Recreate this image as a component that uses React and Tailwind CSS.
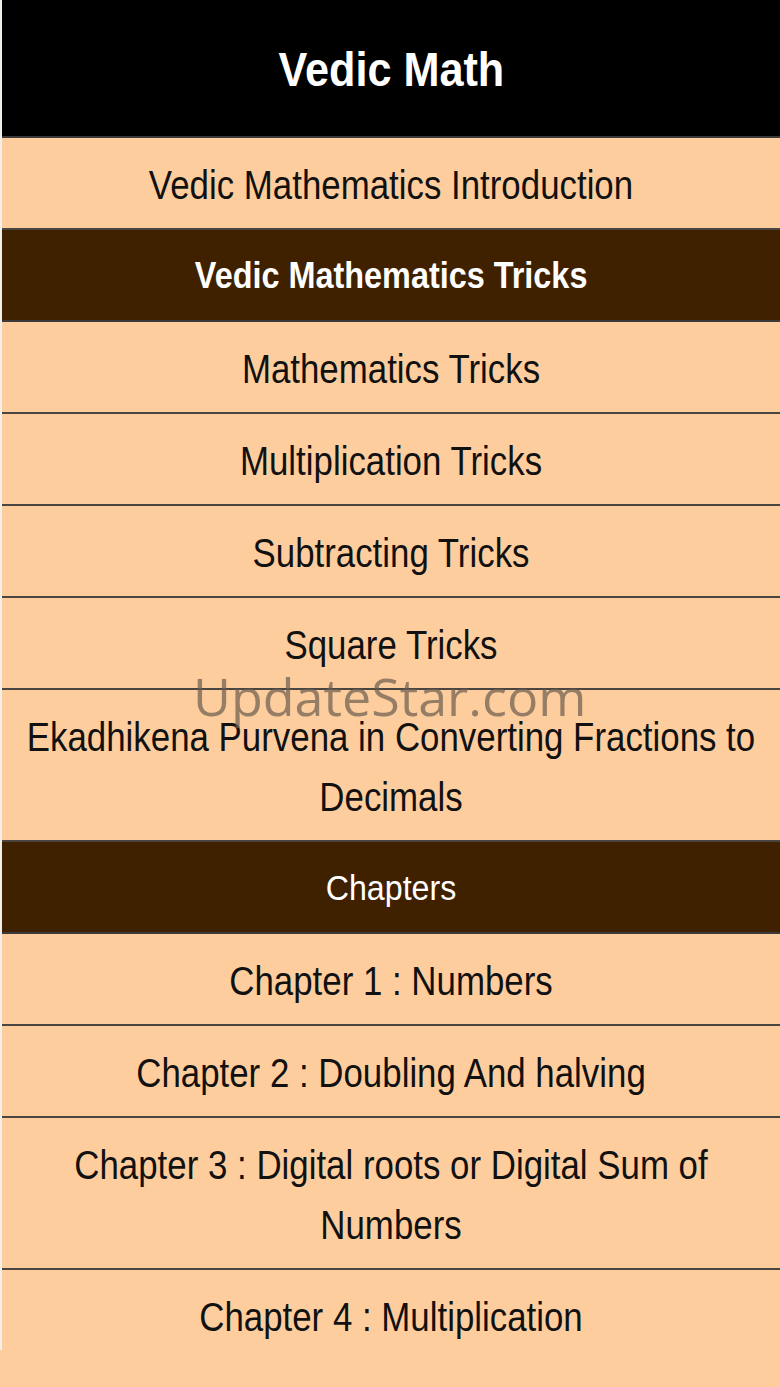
import React from 'react';

const items = [
  { type: 'row', label: 'Vedic Mathematics Introduction' },
  { type: 'head', label: 'Vedic Mathematics Tricks', bold: true },
  { type: 'row', label: 'Mathematics Tricks' },
  { type: 'row', label: 'Multiplication Tricks' },
  { type: 'row', label: 'Subtracting Tricks' },
  { type: 'row', label: 'Square Tricks' },
  { type: 'row', label: 'Ekadhikena Purvena in Converting Fractions to Decimals' },
  { type: 'head', label: 'Chapters' },
  { type: 'row', label: 'Chapter 1 : Numbers' },
  { type: 'row', label: 'Chapter 2 : Doubling And halving' },
  { type: 'row', label: 'Chapter 3 : Digital roots or Digital Sum of Numbers' },
  { type: 'row', label: 'Chapter 4 : Multiplication', last: true },
];

const font = { fontFamily: '"Liberation Sans", Arial, sans-serif' };

// screenshot text is squeezed horizontally, so each label gets a scale-x
const App = () => {
  return (
    <div className="relative min-h-screen overflow-hidden bg-[#fecd9d]" style={font}>
      <div className="border-l-2 border-[#f3eee8]">
        <header className="h-[138px] bg-black flex items-center justify-center border-b-2 border-[#3a3a3a]">
          <h1 className="text-white font-bold text-[48px] leading-none scale-x-[0.9] pt-1">Vedic Math</h1>
        </header>
        <ul>
          {items.map((it, i) =>
            it.type === 'head' ? (
              <li
                key={i}
                className="bg-[#3f2100] text-white flex justify-center border-b-2 border-[#3a3a3a] pt-[16px] pb-[14px] leading-[60px]"
              >
                {it.bold ? (
                  <span className="shrink-0 font-bold text-[36px] scale-x-[0.9]">{it.label}</span>
                ) : (
                  <span className="shrink-0 text-[35px] scale-x-[0.92]">{it.label}</span>
                )}
              </li>
            ) : (
              <li
                key={i}
                className={`flex justify-center text-[#111] leading-[60px] ${it.last ? 'pt-[17px] pb-[3px]' : 'pt-[17px] pb-[13px] border-b-2 border-[#4a4540]'}`}
              >
                <span className="shrink-0 w-[880px] text-center text-[41px] scale-x-[0.85]">{it.label}</span>
              </li>
            )
          )}
        </ul>
      </div>
      <div
        className="absolute left-[193px] top-[670px] text-[52px] leading-none text-[#6b5d50] opacity-70 pointer-events-none"
        style={{ fontFamily: '"Open Sans", sans-serif' }}
      >
        UpdateStar.com
      </div>
    </div>
  );
};

export default App;
